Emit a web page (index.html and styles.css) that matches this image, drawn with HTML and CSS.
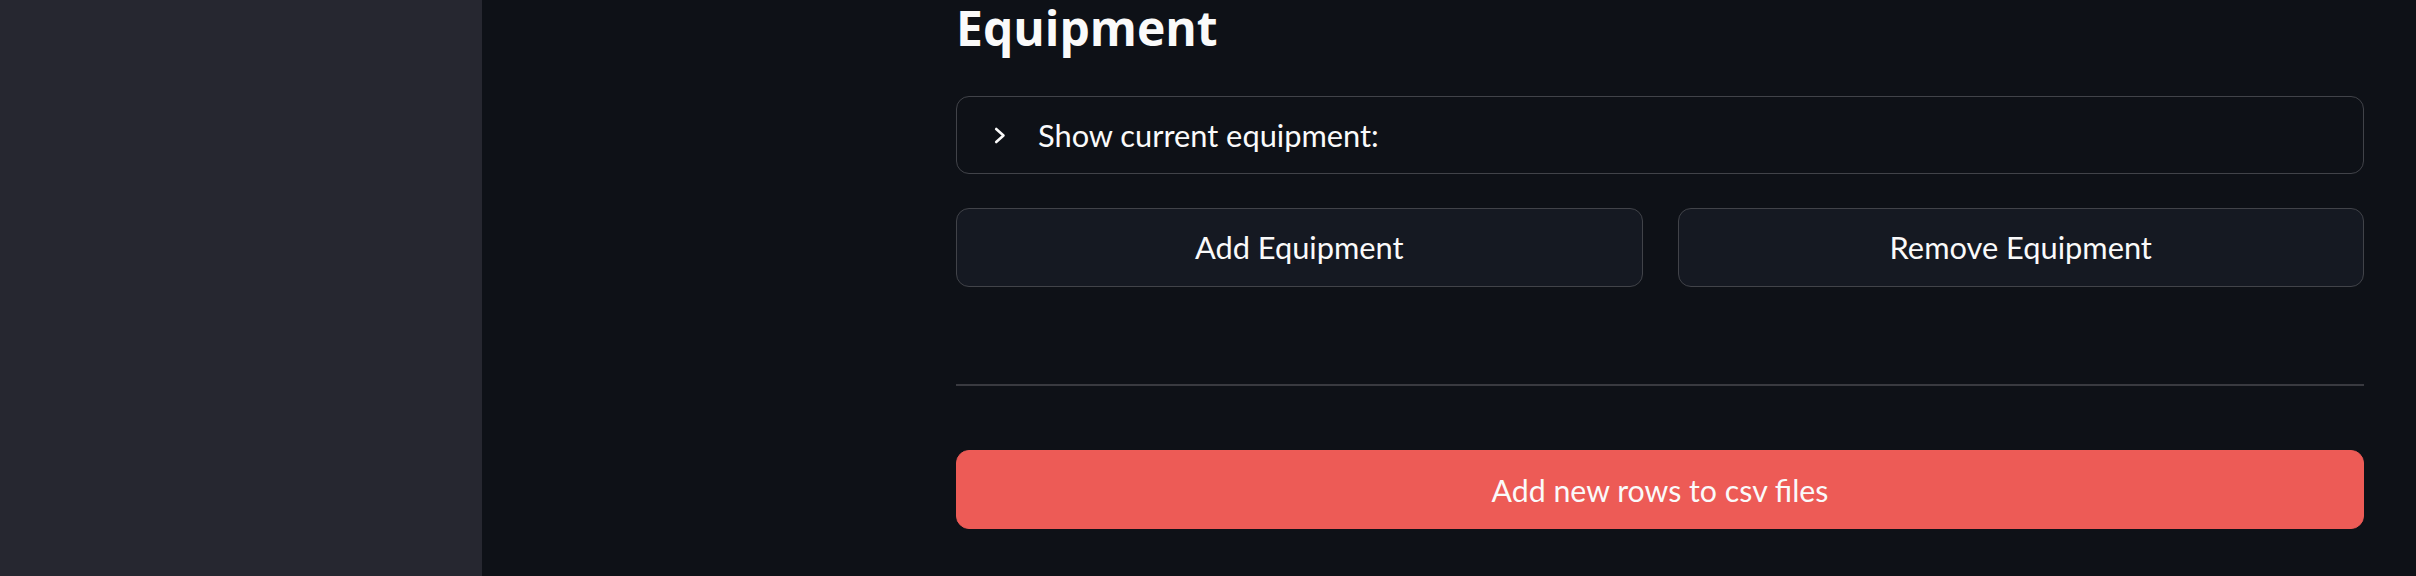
FILE: index.html
```html
<!DOCTYPE html>
<html>
<head>
<meta charset="utf-8">
<link rel="stylesheet" href="styles.css">
</head>
<body>
<div class="app">
  <aside class="sidebar"></aside>
  <main class="main">
    <div class="block">
      <h2 class="title">Equipment</h2>
      <div class="expander">
        <svg class="chev" width="12" height="17" viewBox="0 0 12 17"><polyline points="2.2,2 9.5,8.5 2.2,15" fill="none" stroke="#fafafa" stroke-width="2.6" stroke-linecap="round" stroke-linejoin="round"/></svg>
        <span class="exp-label">Show current equipment:</span>
      </div>
      <div class="cols">
        <button class="btn">Add Equipment</button>
        <button class="btn">Remove Equipment</button>
      </div>
      <hr class="divider">
      <button class="btn primary">Add new rows to csv files</button>
    </div>
  </main>
</div>
</body>
</html>
```

FILE: styles.css
```css
html, body {
  margin: 0;
  padding: 0;
  background: #0e1117;
  height: 576px;
  overflow: hidden;
}
body {
  font-family: Lato, "Noto Sans", sans-serif;
  color: #fafafa;
}
.app {
  display: flex;
  height: 576px;
}
.sidebar {
  width: 482px;
  flex: none;
  background: #262730;
}
.main {
  flex: 1;
  padding: 0 52px 0 474px;
}
.block {
  display: flex;
  flex-direction: column;
}
.title {
  margin: 0;
  font-family: "Open Sans", Lato, sans-serif;
  font-size: 48px;
  font-weight: 700;
  line-height: 56px;
  height: 56px;
  margin-bottom: 40px;
}
.expander {
  box-sizing: border-box;
  height: 78px;
  border: 1px solid #414349;
  border-radius: 13px;
  display: flex;
  align-items: center;
  padding-left: 37px;
  gap: 32px;
}
.chev { flex: none; }
.exp-label {
  font-size: 30.8px;
}
.cols {
  margin-top: 34px;
  display: flex;
  gap: 35px;
}
.btn {
  box-sizing: border-box;
  flex: 1;
  height: 79px;
  border: 1px solid #414349;
  border-radius: 13px;
  background: #151922;
  color: #fafafa;
  font-family: Lato, "Noto Sans", sans-serif;
  font-size: 30.8px;
  display: flex;
  align-items: center;
  justify-content: center;
  padding: 0;
}
.divider {
  margin: 97px 0 0 0;
  height: 2px;
  border: none;
  background: #393a40;
}
.primary {
  margin-top: 64px;
  flex: none;
  width: 100%;
  font-size: 30.3px;
  background: #ed5b56;
  border-color: #ed5b56;
}
```
